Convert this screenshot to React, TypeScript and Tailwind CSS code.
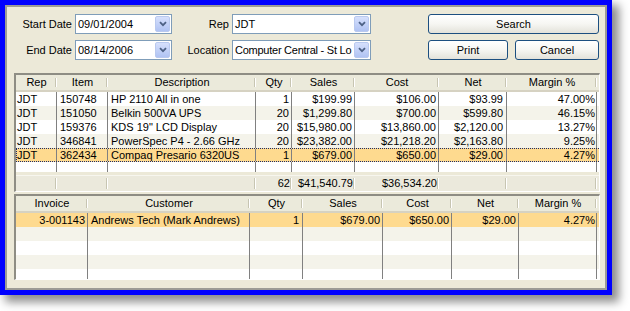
import React from "react";

type Col = { w: string; a: string; label: string };

const topCols: Col[] = [
  { w: "w-[41px]", a: "justify-start pl-[1px]", label: "Rep" },
  { w: "w-[51px]", a: "justify-start pl-[3px]", label: "Item" },
  { w: "w-[148px]", a: "justify-start pl-[3px]", label: "Description" },
  { w: "w-[36px]", a: "justify-end pr-[2px]", label: "Qty" },
  { w: "w-[63px]", a: "justify-end pr-[2px]", label: "Sales" },
  { w: "w-[84px]", a: "justify-end pr-[2px]", label: "Cost" },
  { w: "w-[68px]", a: "justify-end pr-[3px]", label: "Net" },
  { w: "w-[90px]", a: "justify-end pr-[1px]", label: "Margin %" },
];

const bottomCols: Col[] = [
  { w: "w-[72px]", a: "justify-end pr-[2px]", label: "Invoice" },
  { w: "w-[162px]", a: "justify-start pl-[3px]", label: "Customer" },
  { w: "w-[53px]", a: "justify-end pr-[3px]", label: "Qty" },
  { w: "w-[80px]", a: "justify-end pr-[2px]", label: "Sales" },
  { w: "w-[69px]", a: "justify-end pr-[2px]", label: "Cost" },
  { w: "w-[67px]", a: "justify-end pr-[2px]", label: "Net" },
  { w: "w-[78px]", a: "justify-end pr-[1px]", label: "Margin %" },
];

const topRows: string[][] = [
  ["JDT", "150748", "HP 2110 All in one", "1", "$199.99", "$106.00", "$93.99", "47.00%"],
  ["JDT", "151050", "Belkin 500VA UPS", "20", "$1,299.80", "$700.00", "$599.80", "46.15%"],
  ["JDT", "159376", 'KDS 19" LCD Display', "20", "$15,980.00", "$13,860.00", "$2,120.00", "13.27%"],
  ["JDT", "346841", "PowerSpec P4 - 2.66 GHz", "20", "$23,382.00", "$21,218.20", "$2,163.80", "9.25%"],
  ["JDT", "362434", "Compaq Presario 6320US", "1", "$679.00", "$650.00", "$29.00", "4.27%"],
];

const topFooter = ["", "", "", "62", "$41,540.79", "$36,534.20", "", ""];

const bottomRows: string[][] = [
  ["3-001143", "Andrews Tech (Mark Andrews)", "1", "$679.00", "$650.00", "$29.00", "4.27%"],
  ["", "", "", "", "", "", ""],
  ["", "", "", "", "", "", ""],
  ["", "", "", "", "", "", ""],
];

function Combo({ value, w, text = "" }: { value: string; w: string; text?: string }) {
  return (
    <div className={`flex h-[20px] items-stretch border border-[#7F9DB9] bg-white ${w}`}>
      <div className={`flex-1 overflow-hidden whitespace-nowrap pl-[2px] leading-[18px] ${text}`}>{value}</div>
      <div className="m-[1px] flex w-[15px] shrink-0 items-center justify-center rounded-[2px] border border-[#B9C9EF] bg-gradient-to-b from-[#D6E0FC] to-[#B0C3F3]">
        <svg width="8" height="6" viewBox="0 0 8 6">
          <path d="M1 1.2L4 4.2L7 1.2" stroke="#4D6185" strokeWidth="1.8" fill="none" />
        </svg>
      </div>
    </div>
  );
}

function XPButton({ label, w }: { label: string; w: string }) {
  return (
    <div
      className={`flex h-[20px] items-center justify-center rounded-[3px] border border-[#1C4F80] bg-gradient-to-b from-white via-[#F6F6F2] to-[#E3E2DA] ${w}`}
    >
      {label}
    </div>
  );
}

function HeaderRow({ cols }: { cols: Col[] }) {
  return (
    <div className="flex h-[17px] border-b-2 border-[#D6D2C2] bg-[#EBEADB]">
      {cols.map((c, i) => (
        <div key={i} className={`relative flex items-center justify-center ${c.w}`}>
          {c.label}
          <span className="absolute bottom-[3px] right-0 top-[3px] w-[2px] border-l border-r border-l-[#C7C5B2] border-r-white" />
        </div>
      ))}
    </div>
  );
}

function DataRow({
  cols,
  cells,
  bg,
  focus,
}: {
  cols: Col[];
  cells: string[];
  bg: string;
  focus?: boolean;
}) {
  return (
    <div
      className={`flex h-[14px] ${bg} ${focus ? "border-y border-l border-dotted border-[#1C2C6C]" : ""}`}
    >
      {cols.map((c, i) => (
        <div
          key={i}
          className={`flex items-center overflow-hidden whitespace-nowrap border-r border-[#808080] ${c.a} ${c.w} ${
            focus && i === 0 ? "-ml-[1px]" : ""
          }`}
        >
          {cells[i]}
        </div>
      ))}
    </div>
  );
}

export default function App() {
  return (
    <div className="h-[311px] w-[630px] bg-white font-['Liberation_Sans',Arial,sans-serif] text-[11px] text-black">
      <div className="h-[295px] w-[612px] border-[5px] border-[#0000FF] shadow-[6px_6px_9px_1px_rgba(0,0,0,0.45)]">
        <div className="flex h-full flex-col border-2 border-[#9C9B95] bg-[#ECE9D8]">
          {/* form */}
          <div className="grid grid-cols-[68px_97px_60px_139px_57px_171px] grid-rows-[20px_20px] gap-y-[6px] pt-[7px]">
            <div className="flex items-center justify-end pr-[3px]">Start Date</div>
            <Combo value="09/01/2004" w="w-[97px]" />
            <div className="flex items-center justify-end pr-[3px]">Rep</div>
            <Combo value="JDT" w="w-[139px]" />
            <div />
            <XPButton label="Search" w="w-[171px]" />

            <div className="flex items-center justify-end pr-[3px]">End Date</div>
            <Combo value="08/14/2006" w="w-[97px]" />
            <div className="flex items-center justify-end pr-[3px]">Location</div>
            <Combo value="Computer Central - St Lo" w="w-[139px]" text="tracking-[-0.25px] pl-[1px]" />
            <div />
            <div className="flex gap-[7px]">
              <XPButton label="Print" w="w-[80px]" />
              <XPButton label="Cancel" w="w-[84px]" />
            </div>
          </div>

          {/* top grid */}
          <div className="ml-[7px] mr-[5px] mt-[13px] h-[119px] border-l-2 border-t-2 border-b border-r border-l-[#8E8D84] border-t-[#8E8D84] border-b-white border-r-white bg-[#ECE9D8]">
            <HeaderRow cols={topCols} />
            <div className="bg-white">
              {topRows.map((r, i) => (
                <DataRow
                  key={i}
                  cols={topCols}
                  cells={r}
                  bg={i === 4 ? "bg-[#FEDA8F]" : i % 2 === 1 ? "bg-[#F4F3EA]" : "bg-white"}
                  focus={i === 4}
                />
              ))}
              <div className="flex h-[10px] bg-white">
                {topCols.map((c, i) => (
                  <div key={i} className={`border-r border-[#808080] ${c.w}`} />
                ))}
              </div>
            </div>
            <div className="mt-[3px] flex h-[16px] border-t border-[#F7F6EF] bg-[#EBE9DC]">
              {topCols.map((c, i) => (
                <div key={i} className={`relative flex items-center ${c.a} ${c.w}`}>
                  {topFooter[i]}
                  <span className="absolute bottom-[2px] right-0 top-[2px] w-[2px] border-l border-r border-l-[#C7C5B2] border-r-white" />
                </div>
              ))}
            </div>
          </div>

          {/* bottom grid */}
          <div className="ml-[7px] mr-[5px] mt-[2px] h-[86px] overflow-hidden border-l-2 border-t-2 border-b border-r border-l-[#8E8D84] border-t-[#8E8D84] border-b-white border-r-white bg-white">
            <HeaderRow cols={bottomCols} />
            {bottomRows.map((r, i) => (
              <DataRow
                key={i}
                cols={bottomCols}
                cells={r}
                bg={i === 0 ? "bg-[#FEDA8F]" : i % 2 === 1 ? "bg-[#F4F3EA]" : "bg-white"}
              />
            ))}
            <div className="flex h-[10px] bg-white">
              {bottomCols.map((c, i) => (
                <div key={i} className={`border-r border-[#808080] ${c.w}`} />
              ))}
            </div>
          </div>
        </div>
      </div>
    </div>
  );
}
